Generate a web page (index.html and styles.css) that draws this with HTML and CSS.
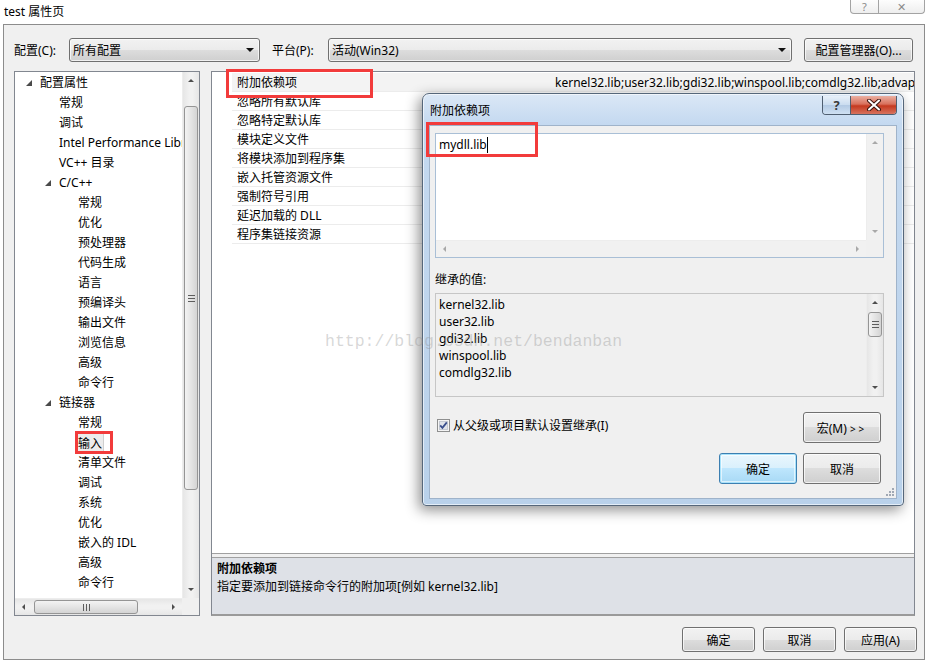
FILE: index.html
```html
<!DOCTYPE html>
<html lang="zh-CN">
<head>
<meta charset="utf-8">
<title>test 属性页</title>
<link rel="stylesheet" href="styles.css">
</head>
<body>
<div class="titlebar">
  <span class="title-text">test 属性页</span>
  <div class="caption-btns">
    <span class="cap cap-help">?</span>
    <span class="cap cap-close">✕</span>
  </div>
</div>

<div class="window">
  <div class="toolbar">
    <span class="tb-label lbl-config">配置(C):</span>
    <div class="combo combo-config"><span>所有配置</span><i class="dd"></i></div>
    <span class="tb-label lbl-platform">平台(P):</span>
    <div class="combo combo-platform"><span>活动(Win32)</span><i class="dd"></i></div>
    <button class="btn btn-mgr">配置管理器(O)...</button>
  </div>

  <div class="main">
    <div class="tree">
      <ul class="tree-list">
        <li class="l0"><i class="exp"></i>配置属性</li>
        <li class="l1">常规</li>
        <li class="l1">调试</li>
        <li class="l1">Intel Performance Library</li>
        <li class="l1">VC++ 目录</li>
        <li class="l1x"><i class="exp"></i>C/C++</li>
        <li class="l2">常规</li>
        <li class="l2">优化</li>
        <li class="l2">预处理器</li>
        <li class="l2">代码生成</li>
        <li class="l2">语言</li>
        <li class="l2">预编译头</li>
        <li class="l2">输出文件</li>
        <li class="l2">浏览信息</li>
        <li class="l2">高级</li>
        <li class="l2">命令行</li>
        <li class="l1x"><i class="exp"></i>链接器</li>
        <li class="l2">常规</li>
        <li class="l2 sel"><span class="sel-box">输入</span></li>
        <li class="l2">清单文件</li>
        <li class="l2">调试</li>
        <li class="l2">系统</li>
        <li class="l2">优化</li>
        <li class="l2">嵌入的 IDL</li>
        <li class="l2">高级</li>
        <li class="l2">命令行</li>
      </ul>
      <div class="sb-v tree-vs">
        <div class="sb-btn"><i class="a-up"></i></div>
        <div class="thumb-v tree-thumb"><i class="grip-h"></i></div>
        <div class="sb-fill"></div>
        <div class="sb-btn"><i class="a-down"></i></div>
      </div>
      <div class="sb-h tree-hs">
        <div class="sb-btn-h"><i class="a-left"></i></div>
        <div class="thumb-h"><i class="grip-v"></i></div>
        <div class="sb-fill"></div>
        <div class="sb-btn-h"><i class="a-right"></i></div>
      </div>
      <div class="corner"></div>
    </div>

    <div class="props">
      <div class="grid">
        <div class="row sel"><span class="name">附加依赖项</span><span class="val">kernel32.lib;user32.lib;gdi32.lib;winspool.lib;comdlg32.lib;advapi32.lib;shell32.lib;ole32.lib;oleaut32.lib;uuid.lib;odbc32.lib;odbccp32.lib</span></div>
        <div class="row"><span class="name">忽略所有默认库</span><span class="val"></span></div>
        <div class="row"><span class="name">忽略特定默认库</span><span class="val"></span></div>
        <div class="row"><span class="name">模块定义文件</span><span class="val"></span></div>
        <div class="row"><span class="name">将模块添加到程序集</span><span class="val"></span></div>
        <div class="row"><span class="name">嵌入托管资源文件</span><span class="val"></span></div>
        <div class="row"><span class="name">强制符号引用</span><span class="val"></span></div>
        <div class="row"><span class="name">延迟加载的 DLL</span><span class="val"></span></div>
        <div class="row"><span class="name">程序集链接资源</span><span class="val"></span></div>
      </div>
      <div class="split"></div>
      <div class="desc">
        <div class="desc-title">附加依赖项</div>
        <div>指定要添加到链接命令行的附加项[例如 kernel32.lib]</div>
      </div>
    </div>
  </div>

  <div class="footer">
    <button class="btn btn-foot">确定</button>
    <button class="btn btn-foot">取消</button>
    <button class="btn btn-foot">应用(A)</button>
  </div>
</div>

<div class="dialog">
  <div class="dlg-title">
    <span class="dlg-title-text">附加依赖项</span>
    <div class="dlg-caps">
      <span class="dcap dcap-help">?</span>
      <span class="dcap dcap-close"><svg width="16" height="12" viewBox="0 0 16 12"><path d="M3 1.5 L13 10.5 M13 1.5 L3 10.5" stroke="#3b1510" stroke-width="4" stroke-linecap="round"/><path d="M3 1.5 L13 10.5 M13 1.5 L3 10.5" stroke="#fff" stroke-width="2" stroke-linecap="round"/></svg></span>
    </div>
  </div>
  <div class="dlg-body">
    <div class="tbox">
      <div class="tbox-text">mydll.lib<i class="caret"></i></div>
      <div class="sb-v dis">
        <div class="sb-btn"><i class="a-up"></i></div>
        <div class="sb-fill"></div>
        <div class="sb-btn"><i class="a-down"></i></div>
      </div>
      <div class="sb-h dis">
        <div class="sb-btn-h"><i class="a-left"></i></div>
        <div class="sb-fill"></div>
        <div class="sb-btn-h"><i class="a-right"></i></div>
      </div>
      <div class="corner"></div>
    </div>
    <div class="inh-label">继承的值:</div>
    <div class="inh">
      <ul class="inh-list">
        <li>kernel32.lib</li>
        <li>user32.lib</li>
        <li>gdi32.lib</li>
        <li>winspool.lib</li>
        <li>comdlg32.lib</li>
      </ul>
      <div class="sb-v">
        <div class="sb-btn"><i class="a-up"></i></div>
        <div class="thumb-v inh-thumb"><i class="grip-h"></i></div>
        <div class="sb-fill"></div>
        <div class="sb-btn"><i class="a-down"></i></div>
      </div>
    </div>
    <div class="opts">
      <label class="chk">
        <svg class="chk-box" width="13" height="13" viewBox="0 0 13 13"><rect x="0.5" y="0.5" width="12" height="12" fill="#f4f4f4" stroke="#8e8f8f"/><rect x="2.5" y="2.5" width="8" height="8" fill="#dfe3ea" stroke="#c4c9d2"/><path d="M3.2 6.4 L5.4 8.8 L9.8 3.4" fill="none" stroke="#394e8c" stroke-width="1.8"/></svg>
        <span>从父级或项目默认设置继承(I)</span>
      </label>
      <button class="btn dbtn">宏(M) <span class="gt">&gt;&gt;</span></button>
    </div>
    <div class="dlg-btns">
      <button class="btn dbtn btn-default">确定</button>
      <button class="btn dbtn">取消</button>
    </div>
    <svg class="grip" width="11" height="11" viewBox="0 0 11 11"><g fill="#a0a8b4"><rect x="8" y="2" width="2" height="2"/><rect x="5" y="5" width="2" height="2"/><rect x="8" y="5" width="2" height="2"/><rect x="2" y="8" width="2" height="2"/><rect x="5" y="8" width="2" height="2"/><rect x="8" y="8" width="2" height="2"/></g></svg>
  </div>
</div>

<div class="mark mark-grid"></div>
<div class="mark mark-tree"></div>
<div class="mark mark-dlg"></div>
<div class="watermark">http://blog.csdn.net/bendanban</div>
</body>
</html>
```

FILE: styles.css
```css
* { box-sizing: border-box; }

body {
  margin: 0;
  width: 928px;
  height: 662px;
  overflow: hidden;
  position: relative;
  background: #fff;
  color: #000;
  font-family: "Noto Sans", "Noto Sans CJK SC", sans-serif;
  font-size: 12px;
  line-height: 16px;
}

button { font: inherit; color: inherit; }

/* ---------- title bar ---------- */
.titlebar {
  height: 24px;
  display: flex;
  justify-content: space-between;
  align-items: flex-start;
}
.title-text { padding: 4px 0 0 4px; }
.caption-btns {
  display: flex;
  height: 14px;
  margin-right: 3px;
  border: 1px solid #a3a3a3;
  border-top: 0;
  border-radius: 0 0 4px 4px;
  background: linear-gradient(#fdfdfd, #eeeeee);
}
.cap {
  display: flex;
  align-items: center;
  justify-content: center;
  font-size: 11px;
  line-height: 12px;
  color: #8a8a8a;
}
.cap-help { width: 28px; border-right: 1px solid #a3a3a3; }
.cap-close { width: 45px; }

/* ---------- main window ---------- */
.window {
  margin: 0 3px;
  height: 636px;
  border: 1px solid #8c8c8c;
  background: #f0f0f0;
  padding: 13px 9px 0 10px;
}

.toolbar {
  display: flex;
  align-items: center;
  height: 24px;
}
.tb-label { flex: none; padding-top: 2px; }
.lbl-config { width: 55px; }
.lbl-platform { width: 56px; margin-left: 12px; }

.combo, .btn {
  border: 1px solid #707070;
  border-radius: 3px;
  background: linear-gradient(#f2f2f2 0, #ebebeb 50%, #dddddd 50%, #cfcfcf 100%);
  box-shadow: inset 0 0 0 1px rgba(255,255,255,0.7);
}
.combo {
  flex: none;
  height: 24px;
  display: flex;
  align-items: center;
  padding: 2px 0 0 3px;
}
.combo-config { width: 191px; }
.combo-platform { width: 464px; }
.dd {
  margin-left: auto;
  margin-right: 5px;
  margin-top: -2px;
  width: 0;
  height: 0;
  border-left: 4px solid transparent;
  border-right: 4px solid transparent;
  border-top: 4px solid #111;
}
.btn {
  flex: none;
  padding: 2px 0 0;
  cursor: default;
}
.btn-mgr { width: 109px; height: 24px; margin-left: 12px; }

.main {
  display: flex;
  margin-top: 9px;
  height: 545px;
}

/* ---------- tree ---------- */
.tree {
  flex: none;
  width: 186px;
  border: 1px solid #828790;
  background: #fff;
  display: grid;
  grid-template-columns: 167px 17px;
  grid-template-rows: 526px 17px;
}
.tree-list {
  list-style: none;
  margin: 0;
  padding: 0;
  overflow: hidden;
  white-space: nowrap;
}
.tree-list li { height: 20px; line-height: 22px; }
.tree-list .l0 { padding-left: 11px; }
.tree-list .l1 { padding-left: 44px; }
.tree-list .l1x { padding-left: 30px; }
.tree-list .l2 { padding-left: 63px; }
.tree-list .l2.sel { padding-left: 61px; line-height: 20px; }
.exp {
  display: inline-block;
  width: 0;
  height: 0;
  border-left: 6px solid transparent;
  border-bottom: 6px solid #4a4a4a;
  margin-right: 8px;
  vertical-align: 1px;
}
.sel-box {
  display: inline-block;
  height: 19px;
  line-height: 19px;
  padding: 0 1px;
  border: 1px solid #cfcfcf;
  background: #ececec;
  vertical-align: top;
  margin-top: 1px;
}

/* ---------- scrollbars ---------- */
.sb-v {
  display: flex;
  flex-direction: column;
  background: linear-gradient(90deg, #e6e6e6, #f1f1f1 40%, #f1f1f1 60%, #e6e6e6);
  border-left: 1px solid #ededed;
}
.sb-h {
  display: flex;
  background: linear-gradient(#e6e6e6, #f1f1f1 40%, #f1f1f1 60%, #e6e6e6);
  border-top: 1px solid #ededed;
}
.sb-btn { flex: none; height: 17px; display: flex; align-items: center; justify-content: center; }
.sb-btn-h { flex: none; width: 17px; display: flex; align-items: center; justify-content: center; }
.sb-fill { flex: 1; }
.corner { background: #f0f0f0; }
.a-up, .a-down, .a-left, .a-right { width: 0; height: 0; display: block; }
.a-up { border-left: 3px solid transparent; border-right: 3px solid transparent; border-bottom: 3px solid #4e4e4e; }
.a-down { border-left: 3px solid transparent; border-right: 3px solid transparent; border-top: 3px solid #4e4e4e; }
.a-left { border-top: 3px solid transparent; border-bottom: 3px solid transparent; border-right: 3px solid #4e4e4e; }
.a-right { border-top: 3px solid transparent; border-bottom: 3px solid transparent; border-left: 3px solid #4e4e4e; }
.dis .a-up { border-bottom-color: #a8a8a8; }
.dis .a-down { border-top-color: #a8a8a8; }
.dis .a-left { border-right-color: #a8a8a8; }
.dis .a-right { border-left-color: #a8a8a8; }

.thumb-v {
  flex: none;
  margin: 0 1px;
  border: 1px solid #959595;
  border-radius: 3px;
  background: linear-gradient(90deg, #f3f3f3, #e4e4e4 50%, #d4d4d4);
  display: flex;
  align-items: center;
  justify-content: center;
}
.tree-thumb { margin-top: 17px; height: 384px; }
.inh-thumb { margin-top: 1px; height: 25px; }
.thumb-h {
  flex: none;
  margin: 1px 0 1px 2px;
  width: 104px;
  border: 1px solid #959595;
  border-radius: 3px;
  background: linear-gradient(#f3f3f3, #e4e4e4 50%, #d4d4d4);
  display: flex;
  align-items: center;
  justify-content: center;
}
.grip-h {
  display: block;
  width: 7px;
  height: 7px;
  background: repeating-linear-gradient(#5d5d5d 0 1px, transparent 1px 3px);
}
.grip-v {
  display: block;
  width: 7px;
  height: 7px;
  background: repeating-linear-gradient(90deg, #5d5d5d 0 1px, transparent 1px 3px);
}

/* ---------- property grid ---------- */
.props {
  flex: 1;
  min-width: 0;
  margin-left: 11px;
  border: 1px solid #828790;
  border-bottom: 2px solid #9a9a9a;
  display: flex;
  flex-direction: column;
}
.grid {
  flex: 1;
  background: #fff;
  padding-top: 1px;
  overflow: hidden;
}
.row {
  display: flex;
  height: 19px;
  line-height: 20px;
  margin-left: 20px;
  border-bottom: 1px solid #ececec;
  white-space: nowrap;
  overflow: hidden;
}
.row.sel { background: #f3f3f3; }
.name { flex: none; width: 320px; padding-left: 5px; }
.val { flex: 1; min-width: 0; padding-left: 3px; overflow: hidden; }
.split {
  height: 5px;
  border-top: 1px solid #a0a0a0;
  border-bottom: 1px solid #a0a0a0;
  background: #f0f0f0;
}
.desc {
  height: 56px;
  background: #dee1e7;
  padding: 2px 5px 0;
  line-height: 18px;
}
.desc-title { font-weight: bold; }

.footer {
  display: flex;
  justify-content: flex-end;
  gap: 8px;
  margin-top: 11px;
  margin-right: -2px;
}
.btn-foot { width: 73px; height: 25px; }

/* ---------- dialog ---------- */
.dialog {
  position: absolute;
  left: 422px;
  top: 93px;
  width: 482px;
  height: 413px;
  border: 1px solid #56677a;
  border-radius: 7px 7px 4px 4px;
  background: linear-gradient(180deg, #dbe8f6 0, #c4d9f0 30px, #b9d1ea 100%);
  box-shadow: -3px 4px 14px rgba(0, 0, 0, 0.45), inset 0 0 0 1px rgba(255,255,255,0.6);
  padding: 0 6px 6px;
}
.dlg-title {
  height: 31px;
  display: flex;
  justify-content: space-between;
  align-items: flex-start;
}
.dlg-title-text { padding: 9px 0 0 1px; }
.dlg-caps {
  display: flex;
  margin-top: 2px;
  height: 19px;
  border: 1px solid #4f5e70;
  border-top: 0;
  border-radius: 0 0 4px 4px;
  overflow: hidden;
}
.dcap { display: flex; align-items: center; justify-content: center; }
.dcap-help {
  width: 28px;
  border-right: 1px solid #4f5e70;
  background: linear-gradient(#e8f0f9, #cadcef 50%, #b2c9e3 50%, #cfe0f2);
  font-weight: bold;
  font-size: 13px;
  color: #3a3a3a;
}
.dcap-close {
  width: 45px;
  background: linear-gradient(#eab0a2, #d9705c 45%, #c5391f 55%, #d7735f);
}
.dlg-body {
  position: relative;
  height: 374px;
  border: 1px solid #9fb3ca;
  background: #f0f0f0;
  padding: 7px 12px 0 5px;
}
.tbox {
  height: 125px;
  border: 1px solid #a9bfd6;
  background: #fff;
  display: grid;
  grid-template-columns: 1fr 17px;
  grid-template-rows: 1fr 17px;
}
.tbox-text { padding: 3px 3px 0; }
.caret {
  display: inline-block;
  width: 1px;
  height: 16px;
  background: #000;
  vertical-align: -4px;
}
.tbox .sb-v, .tbox .sb-h { background: #f1f1f1; }
.inh-label { margin-top: 14px; }
.inh {
  margin-top: 5px;
  height: 104px;
  border: 1px solid #c6c6c6;
  background: #f0f0f0;
  display: grid;
  grid-template-columns: 1fr 17px;
}
.inh-list {
  list-style: none;
  margin: 0;
  padding: 2px 0 0 3px;
}
.inh-list li { height: 17px; line-height: 17px; }
.opts {
  margin-top: 15px;
  display: flex;
  justify-content: space-between;
  align-items: flex-start;
  padding-right: 3px;
}
.chk {
  display: flex;
  align-items: center;
  gap: 3px;
  margin: 5px 0 0 2px;
  padding-top: 1px;
}
.chk-box { display: block; margin-top: -1px; }
.dbtn { width: 78px; height: 31px; }
.gt { letter-spacing: 3px; font-size: 10px; }
.dlg-btns {
  margin-top: 10px;
  display: flex;
  justify-content: flex-end;
  gap: 6px;
  padding-right: 3px;
}
.btn-default {
  border-color: #3c7fb1;
  background: linear-gradient(#eaf6fd 0, #d9f0fc 50%, #bee6fd 50%, #a7d9f5 100%);
  box-shadow: inset 0 0 0 1px #a8e2fb, inset 0 0 0 2px rgba(255,255,255,0.6);
}
.grip { position: absolute; right: 1px; bottom: 1px; }

/* ---------- annotation marks ---------- */
.mark {
  position: absolute;
  border: 3px solid #f23b3b;
}
.mark-grid { left: 226px; top: 69px; width: 147px; height: 29px; }
.mark-tree { left: 75px; top: 431px; width: 38px; height: 23px; }
.mark-dlg { left: 426px; top: 122px; width: 112px; height: 35px; }

.watermark {
  position: absolute;
  left: 325px;
  top: 332px;
  font-family: "Liberation Mono", monospace;
  font-size: 16.5px;
  line-height: 20px;
  color: rgba(140, 140, 140, 0.35);
  white-space: nowrap;
}
```
